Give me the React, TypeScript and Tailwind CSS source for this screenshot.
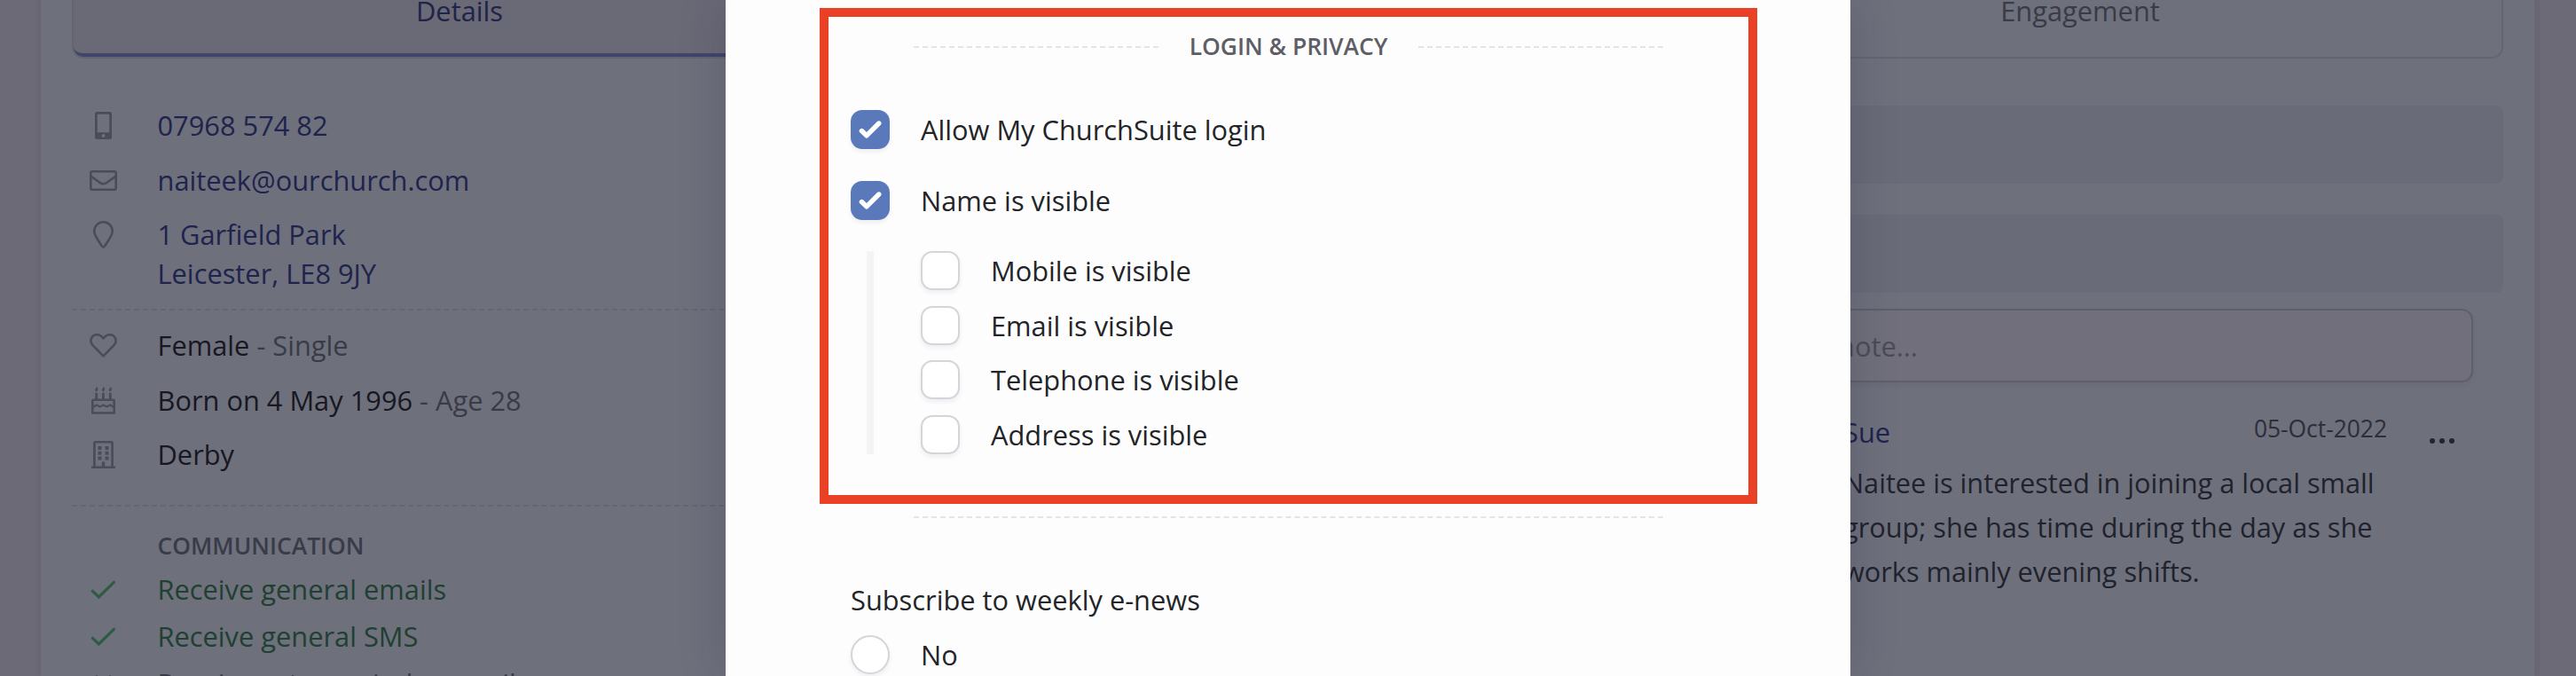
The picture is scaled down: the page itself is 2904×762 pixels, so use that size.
import React, { useState } from "react";

const iconProps = {
  viewBox: "0 0 31 31",
  fill: "none",
  stroke: "currentColor",
  strokeWidth: 2.6,
  className: "w-[31px] h-[31px]",
};

const PhoneIcon = () => (
  <svg {...iconProps}>
    <path
      fill="currentColor"
      stroke="none"
      fillRule="evenodd"
      d="M8.5 0h14A2.5 2.5 0 0 1 25 2.5v26a2.5 2.5 0 0 1-2.5 2.5h-14A2.5 2.5 0 0 1 6 28.500v-26A2.500 2.500 0 0 1 8.500 0ZM8.700 3.200v20h13.600v-20a.5.5 0 0 0-.5-.5h-12.600a.5.5 0 0 0-.5.5ZM15.500 25a2 2 0 1 0 0 4a2 2 0 0 0 0-4Z"
    />
  </svg>
);

const MailIcon = () => (
  <svg {...iconProps}>
    <rect x="1.300" y="5.300" width="28.400" height="20.400" rx="1.800" />
    <path d="M1 10.200 11.800 18Q15.500 20.600 19.200 18L30 10.200" />
  </svg>
);

const PinIcon = () => (
  <svg {...iconProps}>
    <path d="M15.500 29.500c-1 0-1.400-.7-2-1.700C10.500 23 5.200 16.500 5.200 11.600a10.300 10.300 0 0 1 20.600 0c0 4.900-5.300 11.400-8.300 16.200-.6 1-1 1.700-2 1.700Z" />
  </svg>
);

const HeartIcon = () => (
  <svg {...iconProps}>
    <path
      strokeLinejoin="round"
      d="M15.500 27.300 3.500 15.200C-.6 10.600 1.800 3.200 8.400 3.200c3.200 0 5.200 1.600 7.100 4.300 1.900-2.700 3.900-4.300 7.100-4.300 6.600 0 9 7.400 4.900 12Z"
    />
  </svg>
);

const CakeIcon = () => (
  <svg {...iconProps}>
    <path d="M3.300 29.500V16.200Q3.300 14.800 4.700 14.800H26.300Q27.700 14.800 27.700 16.200V29.500M2.100 29.500H28.900" />
    <path
      strokeWidth={2.2}
      d="M4 22.300c2.400 0 2.200-1.600 3.800-1.600s2 1.600 3.900 1.600 2.200-1.600 3.800-1.600 2 1.600 3.900 1.600 2.200-1.600 3.800-1.600 1.400 1.600 3.800 1.600"
    />
    <path strokeWidth={2.8} d="M7.700 6.700V14M15.500 6.700V14M23.300 6.700V14" />
    <path
      fill="currentColor"
      stroke="none"
      d="M8.600 0c.9 1.500 1.100 5.200-.9 5.200S5.500 2.500 8.600 0ZM16.400 0c.9 1.500 1.100 5.200-.9 5.200S13.300 2.500 16.400 0ZM24.200 0c.9 1.500 1.100 5.200-.9 5.200S21.100 2.500 24.200 0Z"
    />
  </svg>
);

const BuildingIcon = () => (
  <svg {...iconProps}>
    <path d="M5.400 29V2.300Q5.400 1.300 6.400 1.300H24.600Q25.600 1.300 25.600 2.300V29M2 29.700H29" />
    <path
      strokeWidth={4}
      d="M9.500 7.900h4M17.500 7.900h4M9.500 13.700h4M17.500 13.700h4M9.500 19.500h4M17.500 19.500h4"
    />
    <path fill="currentColor" stroke="none" d="M13.800 29v-4.600q0-1.200 1.700-1.200t1.700 1.200V29Z" />
  </svg>
);

const TickIcon = () => (
  <svg {...iconProps} strokeWidth={3.2} strokeLinecap="round">
    <path d="M3.400 17.300 10.400 24 27.400 7.300" />
  </svg>
);

const CrossIcon = () => (
  <svg {...iconProps} strokeWidth={3.2} strokeLinecap="round">
    <path d="M8 8 23 23M23 8 8 23" />
  </svg>
);

const contact = [
  { icon: <PhoneIcon />, lines: ["07968 574 82"] },
  { icon: <MailIcon />, lines: ["naiteek@ourchurch.com"] },
  { icon: <PinIcon />, lines: ["1 Garfield Park", "Leicester, LE8 9JY"] },
];

const personal = [
  { icon: <HeartIcon />, text: "Female", extra: " - Single" },
  { icon: <CakeIcon />, text: "Born on 4 May 1996", extra: " - Age 28" },
  { icon: <BuildingIcon />, text: "Derby", extra: "" },
];

const communication = [
  { text: "Receive general emails", on: true },
  { text: "Receive general SMS", on: true },
  { text: "Receive rota reminder emails", on: false },
];

function InfoRow({ icon, children }: { icon: React.ReactNode; children: React.ReactNode }) {
  return (
    <div className="flex pl-5">
      <div className="w-[76.500px] shrink-0 pt-[7px] text-[#4a4c5a]">{icon}</div>
      <div>{children}</div>
    </div>
  );
}

function Checkbox({
  label,
  checked,
  onChange,
}: {
  label: string;
  checked: boolean;
  onChange: () => void;
}) {
  return (
    <label className="flex h-11 items-center gap-[35px]">
      <input type="checkbox" className="sr-only" checked={checked} onChange={onChange} />
      {checked ? (
        <span className="flex h-11 w-11 items-center justify-center rounded-[13px] bg-[#5a79ba] shadow-[0_3px_5px_rgba(40,40,90,0.07)]">
          <svg viewBox="0 0 44 44" className="h-11 w-11" fill="none" stroke="white" strokeWidth="5.400" strokeLinecap="round" strokeLinejoin="round">
            <path d="M12.400 23.500 17.900 28.800 31.800 15" />
          </svg>
        </span>
      ) : (
        <span className="h-11 w-11 rounded-[13px] border-2 border-[#d4d4d9] bg-white shadow-[0_3px_5px_rgba(40,40,90,0.07)]"></span>
      )}
      <span>{label}</span>
    </label>
  );
}

export default function App() {
  const [main, setMain] = useState([
    { label: "Allow My ChurchSuite login", checked: true },
    { label: "Name is visible", checked: true },
  ]);
  const [fields, setFields] = useState([
    { label: "Mobile is visible", checked: false },
    { label: "Email is visible", checked: false },
    { label: "Telephone is visible", checked: false },
    { label: "Address is visible", checked: false },
  ]);
  const flip = (list: typeof main, i: number) =>
    list.map((f, n) => (n === i ? { ...f, checked: !f.checked } : f));

  return (
    <div className="relative h-[762px] w-[2904px] overflow-hidden bg-[#6c6a77] pl-[46px] pr-[45px] font-['Open_Sans',sans-serif] text-[30.800px] leading-[44px] text-[#181722]">
      {/* Profile page */}
      <div className="h-[762px] border-r-2 border-[#676874] bg-[#6e707c] pl-[35px] pr-[35px] shadow-[0_0_6px_rgba(40,40,60,0.15)]">
        {/* Tabs */}
        <div className="flex h-[66px] justify-between rounded-b-[13px] border-2 border-t-0 border-[#656571]">
          <div className="h-16 w-[870px] rounded-bl-[11px] border-b-4 border-[#40456b] bg-[#6a6976] text-center text-[#20234a]">
            <span className="relative -top-[10px]">Details</span>
          </div>
          <div className="h-16 w-[950px] text-center text-[#393b48]">
            <span className="relative -top-[10px]">Engagement</span>
          </div>
        </div>

        <div className="flex justify-between">
          {/* Contact details */}
          <div className="w-[875px] pt-[53px]">
            <div className="flex flex-col gap-[17.500px] text-[#20234d]">
              {contact.map((c) => (
                <InfoRow key={c.lines[0]} icon={c.icon}>
                  {c.lines.map((l) => (
                    <div key={l}>{l}</div>
                  ))}
                </InfoRow>
              ))}
            </div>
            <div className="mt-[18px] border-t-2 border-dashed border-[#67656f]"></div>
            <div className="mt-[17px] flex flex-col gap-[17.500px]">
              {personal.map((p) => (
                <InfoRow key={p.text} icon={p.icon}>
                  {p.text}
                  <span className="whitespace-pre text-[#393b48]">{p.extra}</span>
                </InfoRow>
              ))}
            </div>
            <div className="mt-[35px] border-t-2 border-dashed border-[#67656f]"></div>
            <h3 className="ml-[96.500px] mt-[22px] text-[26.400px] font-semibold text-[#393b48]">COMMUNICATION</h3>
            <div className="mt-[5px] flex flex-col gap-[9px]">
              {communication.map((c) => (
                <div key={c.text} className={c.on ? "flex pl-5 text-[#204031]" : "flex pl-5 text-[#393b48]"}>
                  <div className={c.on ? "w-[76.500px] pt-[7px] text-[#2e5c41]" : "w-[76.500px] pt-[7px]"}>
                    {c.on ? <TickIcon /> : <CrossIcon />}
                  </div>
                  <div className="whitespace-nowrap">{c.text}</div>
                </div>
              ))}
            </div>
          </div>

          {/* Notes */}
          <div className="w-[860px] pt-[53px]">
            <div className="h-[88px] rounded-lg bg-[#6a6b78]"></div>
            <div className="mt-[35px] h-[88px] rounded-lg bg-[#6a6b78]"></div>
            <div className="ml-[34px] mr-[34px] mt-[18px] flex h-[83px] items-center rounded-[13px] border-2 border-[#5f5f6b] bg-[#706f7b] pl-[74px] text-[#4b4b58] shadow-[0_3px_5px_rgba(40,40,60,0.08)]">
              note...
            </div>
            <div className="ml-[116px] mr-[54px] mt-[34px] flex">
              <span className="flex-1 text-[#20234d]">Sue</span>
              <span className="-mt-[4px] text-[26.400px] text-[#2c2e3a]">05-Oct-2022</span>
              <svg viewBox="0 0 28 6" className="ml-12 mr-px mt-[29px] h-[6px] w-7" fill="#22242f">
                <circle cx="3" cy="3" r="3" />
                <circle cx="14" cy="3" r="3" />
                <circle cx="25" cy="3" r="3" />
              </svg>
            </div>
            <p className="ml-[116px] mt-[10px] w-[620px] text-[30.700px] leading-[50px] text-[#20222d]">
              Naitee is interested in joining a local small group; she has time during the day as she
              works mainly evening shifts.
            </p>
          </div>
        </div>
      </div>

      {/* Edit dialog */}
      <div className="absolute left-[818px] top-0 h-[762px] w-[1268px] bg-[#fdfdfe] pt-[9px] text-[#232427] shadow-[0_0_50px_rgba(30,30,60,0.2)]">
        <section className="ml-[106px] h-[559px] w-[1057px] border-[10px] border-[#ea4026] pl-[25px]">
          <div className="ml-[71px] flex h-[68px] w-[845px] items-center text-[26.400px] font-semibold text-[#5d5e66]">
            <div className="flex-1 border-t-2 border-dashed border-[#e4e4e7]"></div>
            <h2 className="-mt-[2px] px-[35px]">LOGIN &amp; PRIVACY</h2>
            <div className="flex-1 border-t-2 border-dashed border-[#e4e4e7]"></div>
          </div>
          <div className="mt-[37px] flex flex-col gap-9">
            {main.map((m, i) => (
              <Checkbox key={m.label} {...m} onChange={() => setMain(flip(main, i))} />
            ))}
          </div>
          <div className="ml-[18px] mt-[35px] flex h-[229px] flex-col justify-between border-l-8 border-[#f4f4f5] pl-[53px]">
            {fields.map((f, i) => (
              <Checkbox key={f.label} {...f} onChange={() => setFields(flip(fields, i))} />
            ))}
          </div>
        </section>
        <div className="ml-[212px] mt-[14px] w-[845px] border-t-2 border-dashed border-[#e4e4e7]"></div>
        <div className="ml-[141px] mt-[70px]">Subscribe to weekly e-news</div>
        <label className="ml-[141px] mt-[18px] flex items-center gap-[35px]">
          <input type="radio" name="enews" className="sr-only" />
          <span className="h-11 w-11 rounded-full border-2 border-[#d4d4d9] bg-white shadow-[0_3px_5px_rgba(40,40,90,0.07)]"></span>
          No
        </label>
      </div>
    </div>
  );
}
